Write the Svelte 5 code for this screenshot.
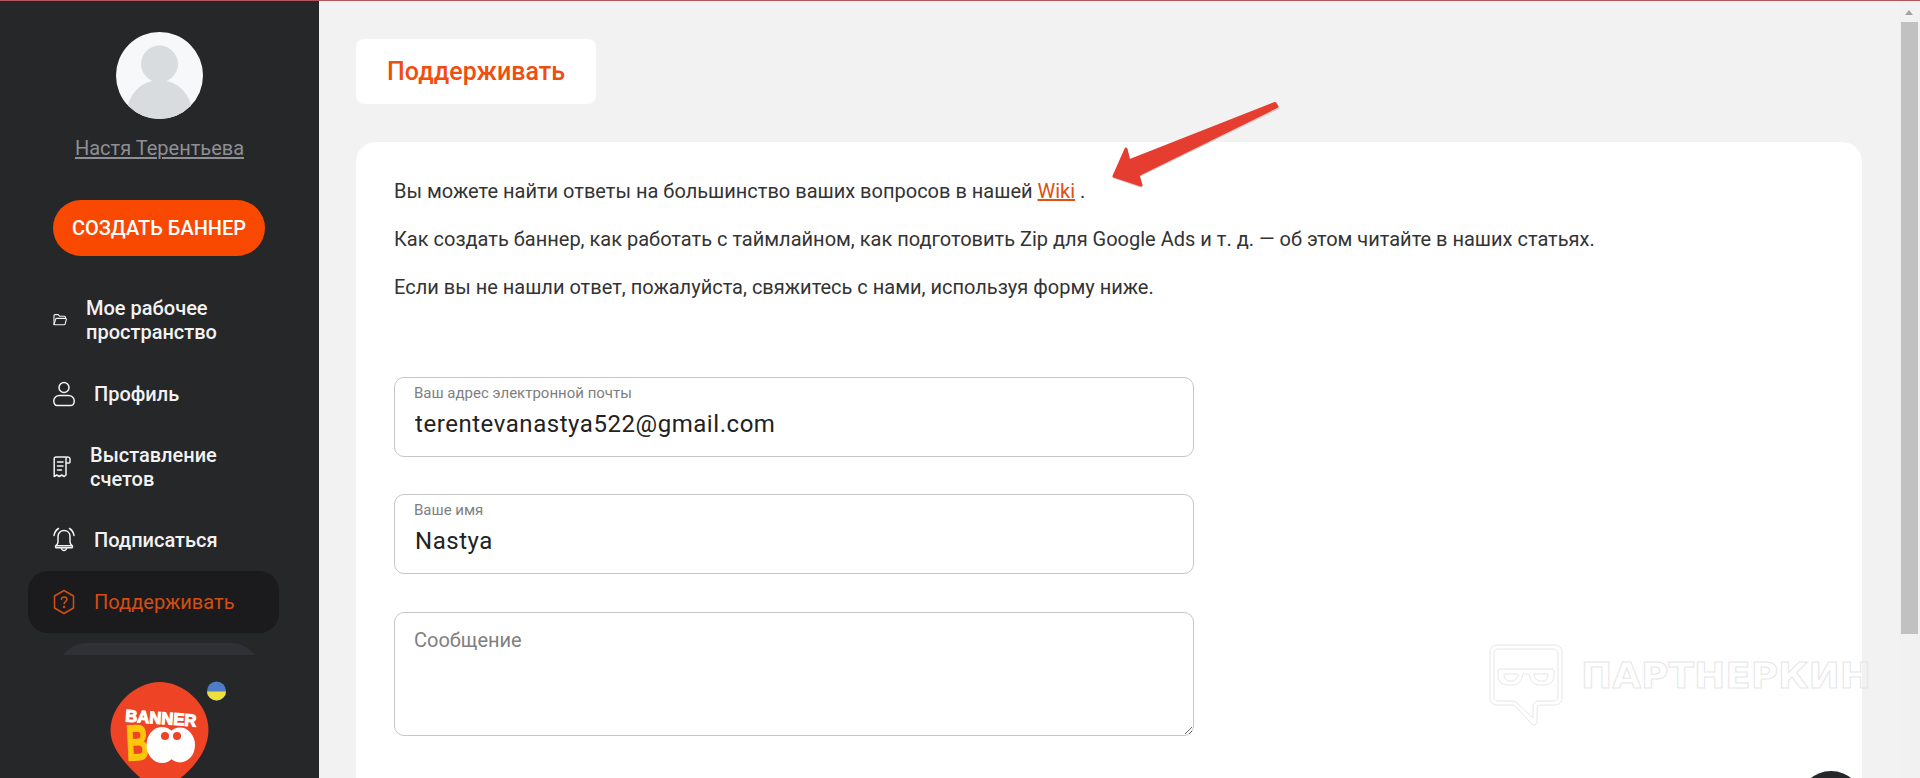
<script>
  const navItems = [
    { label: 'Мое рабочее пространство', icon: 'folder', w: 14, h: 14, shift: true },
    { label: 'Профиль', icon: 'user', w: 22, h: 26 },
    { label: 'Выставление счетов', icon: 'receipt', w: 18, h: 22 },
    { label: 'Подписаться', icon: 'bell', w: 22, h: 26 },
    { label: 'Поддерживать', icon: 'help', w: 22, h: 26, active: true }
  ];
</script>

<div class="page">
  <div class="topline"></div>
  <div class="shell">
    <aside class="sidebar">
      <svg class="avatar" viewBox="0 0 87 87" width="87" height="87" aria-hidden="true">
        <defs><clipPath id="avatarClip"><circle cx="43.5" cy="43.5" r="43.5" /></clipPath></defs>
        <circle cx="43.5" cy="43.5" r="43.5" fill="#f7f8f9" />
        <g clip-path="url(#avatarClip)" fill="#d9dcdf">
          <circle cx="43.5" cy="32" r="18.5" />
          <ellipse cx="43.5" cy="81" rx="32.5" ry="33" />
        </g>
      </svg>
      <a class="username" href="#profile">Настя Терентьева</a>
      <button class="create" type="button">СОЗДАТЬ БАННЕР</button>

      <nav class="nav">
        {#each navItems as item}
          <div class="item" class:active={item.active} class:first={item.shift}>
            <svg class="icon" width={item.w} height={item.h} viewBox="0 0 {item.w} {item.h}" fill="none" stroke="currentColor" stroke-width="1.5" stroke-linecap="round" stroke-linejoin="round" aria-hidden="true">
              {#if item.icon === 'folder'}
                <path d="M1 11.5V2.6C1 2 1.4 1.6 2 1.6h3.2l1.3 1.6h5c.6 0 1 .4 1 1v1.2" stroke-width="1.1" />
                <path d="M1 11.7l1.7-5.6c.1-.4.5-.7.9-.7h8.9c.6 0 1 .5.8 1.1l-1.2 4.6c-.1.4-.5.7-.9.7H1.9" stroke-width="1.1" />
              {:else if item.icon === 'user'}
                <circle cx="11" cy="6.5" r="5" />
                <path d="M6.5 14.5h9c3.2 0 5.7 2.4 5.7 5.3s-1.3 4.7-3.2 4.7H4c-1.9 0-3.2-1.8-3.2-4.7s2.5-5.3 5.7-5.3z" />
              {:else if item.icon === 'receipt'}
                <path d="M13 1H3C2 1 1.2 1.8 1.2 2.8V20.5l2.6-1.5 2.5 1.5 2.4-1.5 2.5 1.5 1.8-1.5V2.5C13 1.7 13.7 1 14.5 1S17 1.7 17 2.8V6c0 .6-.4 1-1 1h-3" />
                <path d="M4.5 6h5.5M4.5 10h5.5M4.5 14h4" />
              {:else if item.icon === 'bell'}
                <path d="M11 3.5c-3.6 0-6 2.6-6 6v5.2c0 1.6-.8 3-2 4h16c-1.2-1-2-2.4-2-4V9.500c0-3.400-2.400-6-6-6z" />
                <path d="M3 18.7c-.8.4-.8 2.100.6 2.100h14.800c1.400 0 1.400-1.700.6-2.100" />
                <path d="M8.500 21c.2 1.600 1.200 2.500 2.500 2.500s2.300-.9 2.500-2.500" />
                <path d="M1 8.500C1.500 5.500 3 3 5.500 1.500M21 8.500C20.500 5.500 19 3 16.500 1.500" />
              {:else}
                <path d="M11 1.500l9.500 5.500v12L11 24.500 1.500 19V7z" />
                <path d="M8.300 10.300c.2-1.500 1.300-2.400 2.800-2.400 1.600 0 2.800 1 2.800 2.400 0 2.200-2.800 2.300-2.800 4.500" />
                <circle cx="11.100" cy="18" r=".5" />
              {/if}
            </svg>
            <span class="label">{item.label}</span>
          </div>
        {/each}
        <div class="clipped"></div>
      </nav>

      <div class="logo">
        <svg width="319" height="123" viewBox="0 0 319 123" aria-label="BannerBoo">
          <path d="M160 27C136 27 110 50 110.500 76c.4 19 18 36 30 47h40c13-10 28-28 28-48 0-27-26-48-48.500-48z" fill="#ee4325" />
          <text x="0" y="0" font-size="17" class="logo-text" transform="translate(125 66.500) rotate(4) scale(.98 1)" fill="#fff" stroke="#fff" stroke-width="1.100">BANNER</text>
          <text x="0" y="0" class="logo-text" font-size="50" fill="#fcc60b" stroke="#fcc60b" stroke-width="1.500" transform="translate(127 105.500) rotate(-3) scale(.62 1)">B</text>
          <ellipse cx="162" cy="90" rx="15.500" ry="18" fill="#fff" />
          <ellipse cx="180" cy="90" rx="15" ry="17.500" fill="#fff" />
          <circle cx="165" cy="81" r="4" fill="#ee4325" />
          <circle cx="177" cy="81" r="4" fill="#ee4325" />
          <circle cx="216.500" cy="36" r="9.500" fill="#4f7cc4" />
          <path d="M207 36.500h19a9.500 9 0 0 1-19 0z" fill="#efdf3a" />
        </svg>
      </div>
    </aside>

    <main class="main">
      <div class="title-card"><h1>Поддерживать</h1></div>
      <section class="card">
        <p>Вы можете найти ответы на большинство ваших вопросов в нашей <a href="#wiki">Wiki</a> .</p>
        <p>Как создать баннер, как работать с таймлайном, как подготовить Zip для Google Ads и т. д. — об этом читайте в наших статьях.</p>
        <p>Если вы не нашли ответ, пожалуйста, свяжитесь с нами, используя форму ниже.</p>

        <form class="form">
          <label class="field">
            <span>Ваш адрес электронной почты</span>
            <input type="email" value="terentevanastya522@gmail.com" />
          </label>
          <label class="field">
            <span>Ваше имя</span>
            <input type="text" value="Nastya" />
          </label>
          <textarea placeholder="Сообщение"></textarea>
        </form>
      </section>
    </main>

    <div class="scrollbar">
      <div class="arrow-up"></div>
      <div class="thumb"></div>
    </div>
  </div>

  <svg class="annotation" width="190" height="110" viewBox="1100 95 190 110" aria-hidden="true">
    <path class="shadow" d="M1275 105L1278 108 1138 176 1141 186 1114 177 1126 150 1129 162z" />
    <path class="arrow" d="M1275 103.500L1277 106.500 1138 175 1141 185 1114 176 1126 149 1129 161z" />
  </svg>

  <svg class="watermark" width="390" height="90" viewBox="0 0 390 90" aria-hidden="true">
    <g fill="none" stroke="#e6e6e6" stroke-width="1">
      <path d="M8 1h58c4 0 7 3 7 7v46c0 4-3 7-7 7H52c-3 0-4 1-4 4v12c0 4-4 5-6 2L27 63c-1-1-2-2-4-2H8c-4 0-7-3-7-7V8c0-4 3-7 7-7z" />
      <path d="M9 5h56c2 0 4 2 4 4v44c0 2-2 4-4 4H50c-4 0-6 3-6 6v11L28 59c-1-1-3-2-5-2H9c-2 0-4-2-4-4V9c0-2 2-4 4-4z" />
      <path d="M11 25h52c1.500 0 2 1 2 2v5c0 5-4 9-9 9H50c-4 0-8-3-9-8l-1-3h-6l-1 3c-1 5-5 8-9 8H18c-5 0-9-4-9-9v-5c0-1 .500-2 2-2z" />
      <path d="M15 30h14c0 4-3 7-6 7h-3c-3 0-5-3-5-7zM45 30h14c0 4-2 7-5 7h-3c-3 0-6-3-6-7z" />
    </g>
    <text x="92" y="44" textLength="290" lengthAdjust="spacingAndGlyphs" class="wm-text">ПАРТНЕРКИН</text>
  </svg>

  <div class="chat"></div>
</div>

<style>
  :global(body) {
    margin: 0;
    overflow: hidden;
    font-family: Roboto, "Noto Sans", sans-serif;
  }
  .page {
    position: relative;
    display: flex;
    flex-direction: column;
    height: 778px;
    overflow: hidden;
    background: #f2f2f2;
  }
  .topline {
    flex: none;
    height: 1px;
    background: #b4545b;
  }
  .shell {
    flex: 1;
    display: flex;
    min-height: 0;
  }
  .sidebar {
    flex: none;
    width: 319px;
    display: flex;
    flex-direction: column;
    align-items: center;
    padding-top: 31px;
    box-sizing: border-box;
    background: #262729;
    color: #f2f2f2;
  }
  .avatar {
    flex: none;
    display: block;
  }
  .username {
    margin-top: 15px;
    font-size: 20px;
    line-height: 28px;
    color: #8d8f94;
    text-decoration: underline;
    text-underline-offset: 2px;
  }
  .create {
    flex: none;
    margin: 38px 1px 0 0;
    width: 212px;
    height: 56px;
    padding: 0;
    border: 0;
    border-radius: 28px;
    background: #f94900;
    color: #fff;
    font: 500 20px/24px Roboto, sans-serif;
  }
  .nav {
    flex: none;
    align-self: stretch;
    height: 376px;
    margin-top: 23px;
    padding: 0 40px 0 28px;
    overflow: hidden;
  }
  .item {
    display: flex;
    align-items: center;
    gap: 19px;
    min-height: 26px;
    padding: 18px 25px;
    border-radius: 20px;
    font-size: 20px;
    font-weight: 500;
    line-height: 24px;
    color: #f2f2f2;
  }
  .item.first {
    padding-top: 17px;
    padding-bottom: 19px;
  }
  .item.active {
    background: #1b1b1d;
    color: #d44e12;
    font-weight: 400;
  }
  .label {
    max-width: 130px;
  }
  .item.active .label {
    max-width: none;
  }
  .icon {
    flex: none;
    display: block;
  }
  .clipped {
    height: 40px;
    margin: 10px 18px 0 29px;
    border-radius: 30px 30px 0 0;
    background: #303136;
  }
  .logo {
    flex: 1;
    align-self: stretch;
    min-height: 0;
    overflow: hidden;
  }
  .logo svg {
    display: block;
  }
  .logo-text {
    font-family: "Liberation Sans", sans-serif;
    font-weight: 700;
  }
  .main {
    flex: 1;
    min-width: 0;
    padding: 38px 36px 0 37px;
  }
  .title-card {
    width: 240px;
    height: 65px;
    display: flex;
    align-items: center;
    justify-content: center;
    border-radius: 8px;
    background: #fff;
  }
  h1 {
    margin: 0;
    font-size: 25px;
    font-weight: 500;
    line-height: 32px;
    color: #f04e0e;
  }
  .card {
    margin-top: 38px;
    min-height: 800px;
    padding: 35px 38px;
    border-radius: 20px;
    background: #fff;
  }
  p {
    margin: 0 0 20px;
    font-size: 20px;
    font-weight: 400;
    line-height: 28px;
    color: #333;
  }
  p a {
    color: #e0500f;
  }
  .form {
    display: flex;
    flex-direction: column;
    gap: 37px;
    width: 800px;
    margin-top: 76px;
  }
  .field {
    display: flex;
    flex-direction: column;
    box-sizing: border-box;
    height: 80px;
    padding: 6px 19px 0;
    border: 1px solid #c6c6c6;
    border-radius: 10px;
  }
  .field span {
    font-size: 15px;
    line-height: 18px;
    color: #808080;
  }
  .field input {
    width: 100%;
    height: 34px;
    margin-top: 5px;
    padding: 0 0 0 1px;
    border: 0;
    outline: 0;
    font: 400 24px/34px Roboto, sans-serif;
    letter-spacing: .55px;
    color: #222;
    background: transparent;
  }
  textarea {
    display: block;
    box-sizing: border-box;
    width: 800px;
    height: 124px;
    margin-top: 1px;
    padding: 14px 19px;
    border: 1px solid #c6c6c6;
    border-radius: 10px;
    outline: 0;
    font: 400 20px/26px Roboto, sans-serif;
    color: #222;
  }
  textarea::placeholder {
    color: #808080;
    opacity: 1;
  }
  .scrollbar {
    flex: none;
    width: 22px;
    background: #f1f1f1;
    position: relative;
  }
  .arrow-up {
    width: 0;
    height: 0;
    margin: 9px 0 0 7px;
    border-left: 4.500px solid transparent;
    border-right: 4.500px solid transparent;
    border-bottom: 5px solid #a3a3a3;
  }
  .thumb {
    width: 17px;
    height: 612px;
    margin: 7px 0 0 3px;
    background: #c1c1c1;
  }
  .annotation {
    position: absolute;
    left: 1100px;
    top: 95px;
  }
  .arrow {
    fill: #e53e30;
    stroke: #e53e30;
    stroke-width: 3;
    stroke-linejoin: round;
  }
  .shadow {
    fill: #cfcfcf;
    stroke: #cfcfcf;
    stroke-width: 3;
    stroke-linejoin: round;
  }
  .watermark {
    position: absolute;
    left: 1489px;
    top: 644px;
    pointer-events: none;
  }
  .wm-text {
    font-family: "DejaVu Sans", sans-serif;
    font-size: 36px;
    font-weight: 700;
    fill: none;
    stroke: #e6e6e6;
    stroke-width: 1;
  }
  .chat {
    position: absolute;
    left: 1799px;
    top: 771px;
    width: 64px;
    height: 64px;
    border-radius: 50%;
    background: #26272a;
  }
</style>
